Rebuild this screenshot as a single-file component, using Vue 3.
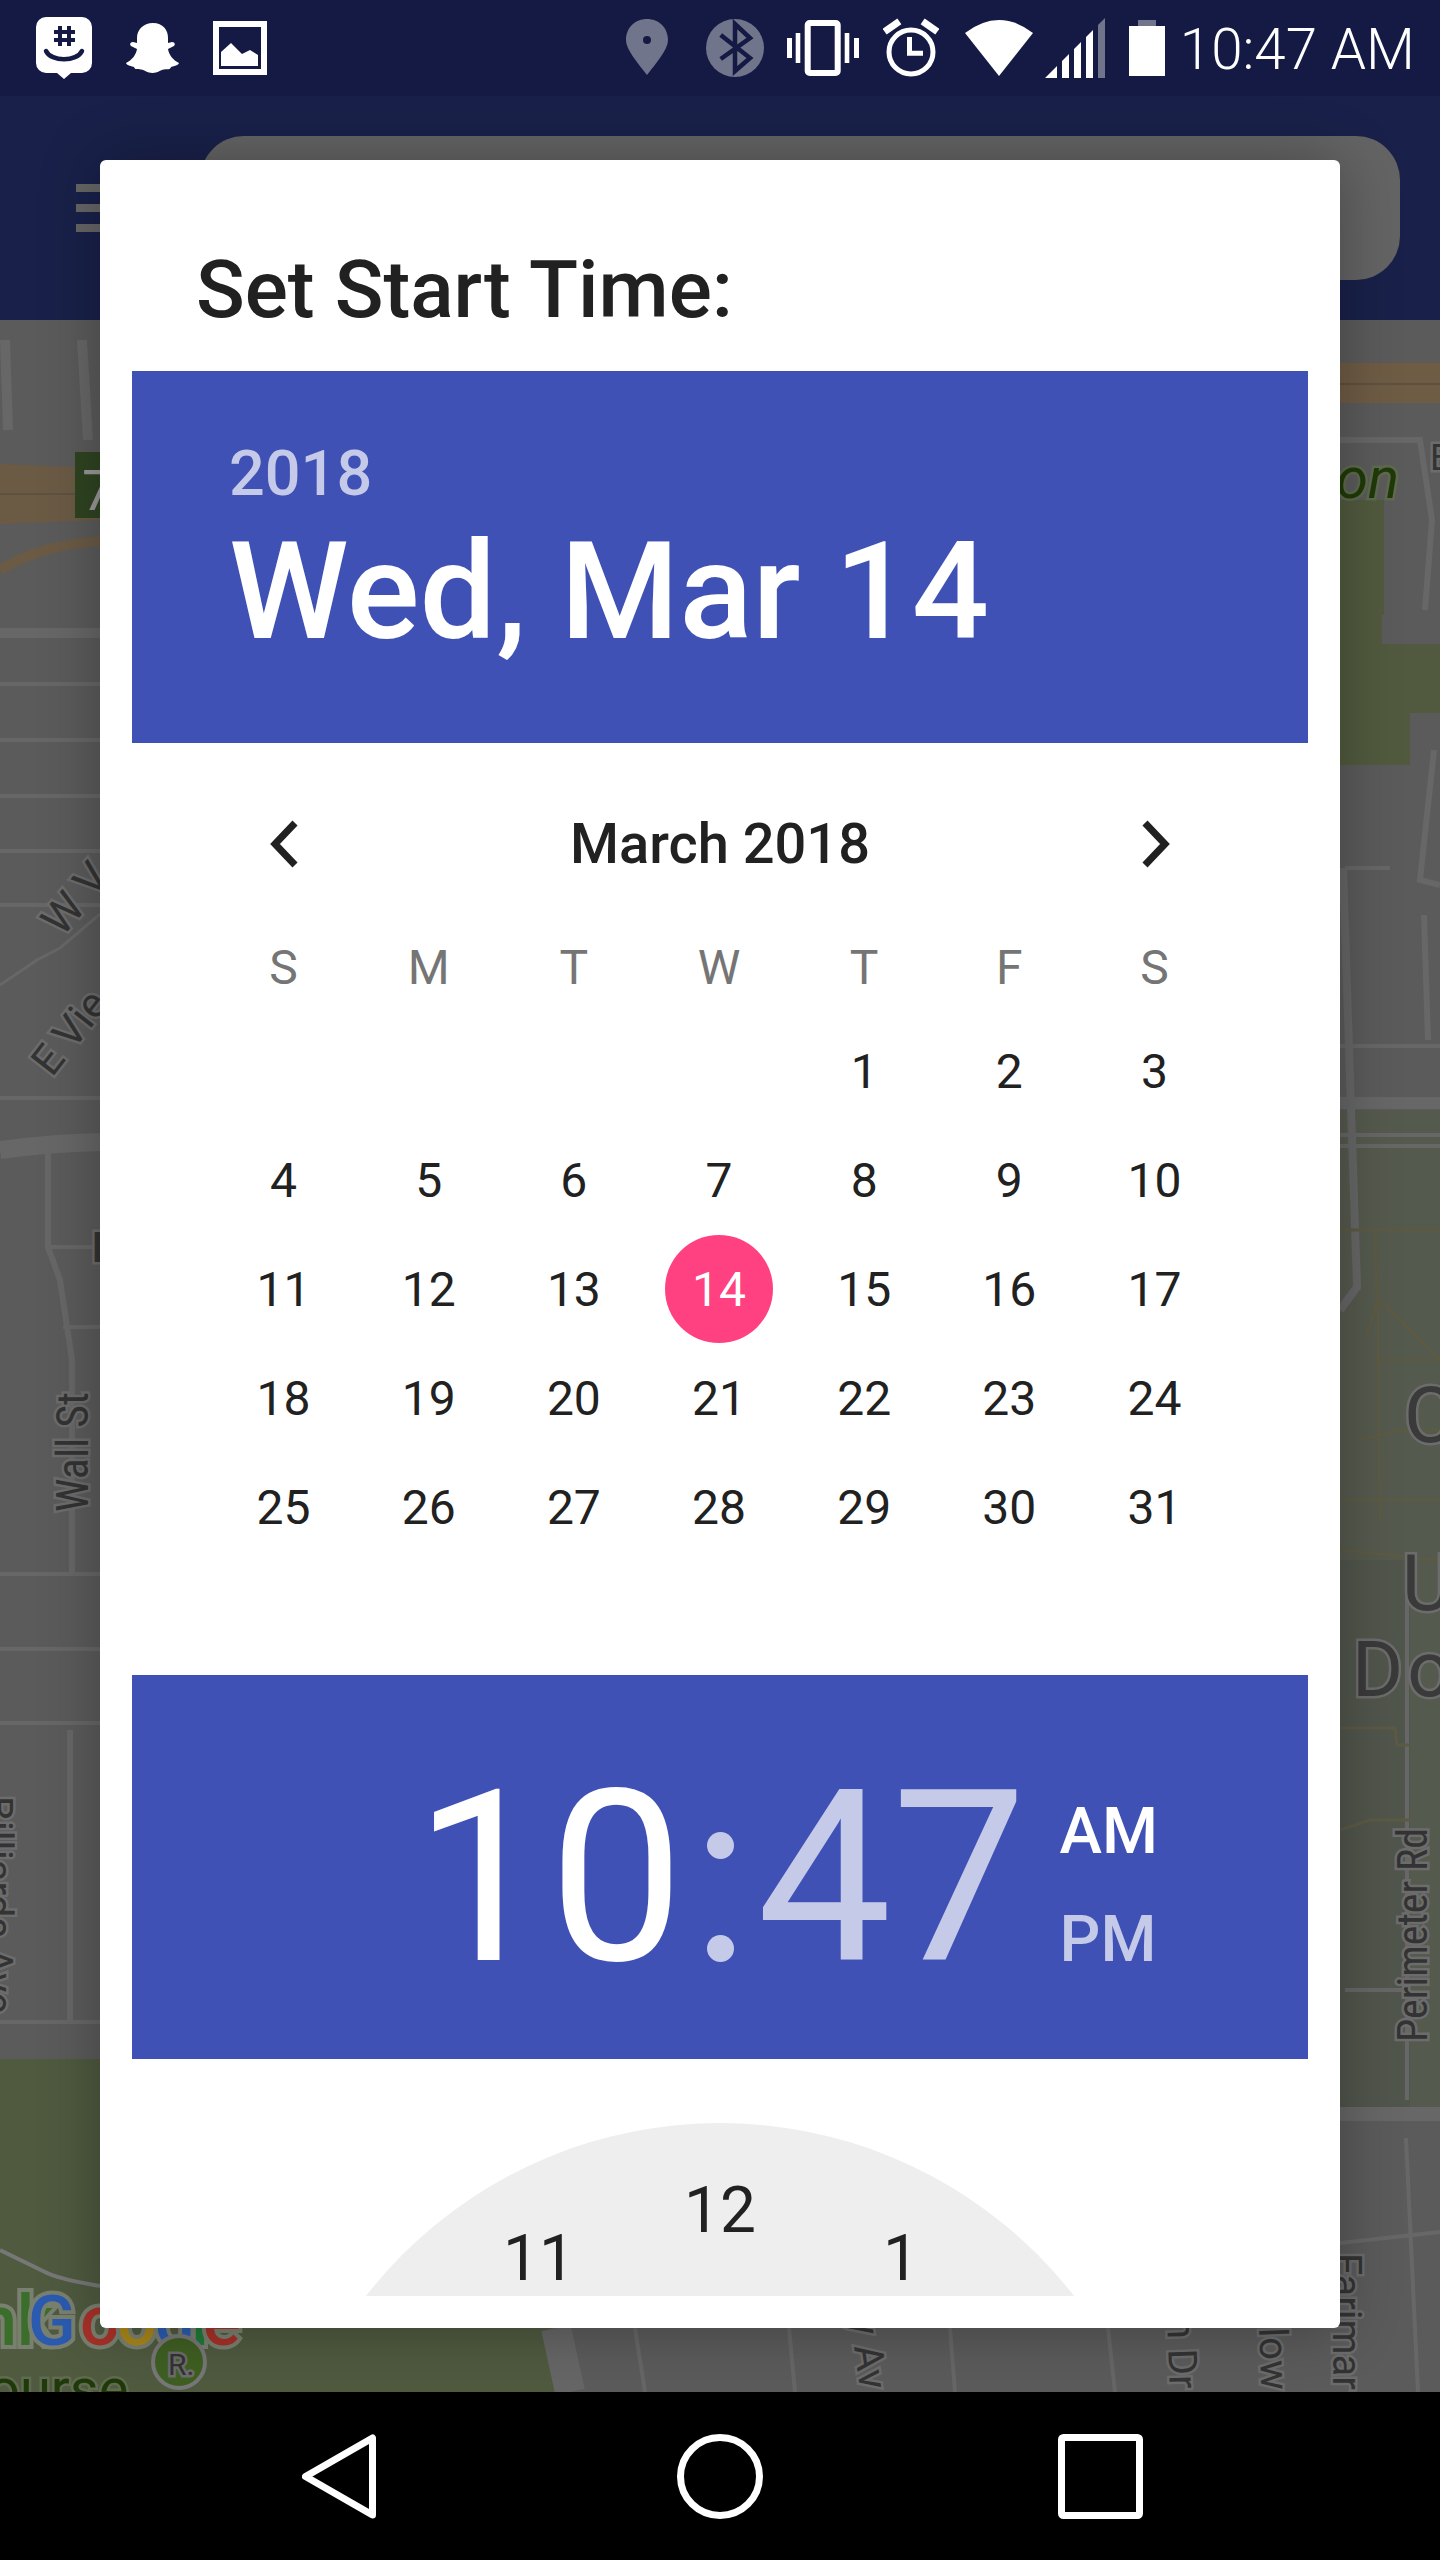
<template>
  <div class="phone">
    <div class="status-bar">
      <div class="status-left">
        <svg class="ico" width="56" height="96" viewBox="0 0 56 96">
          <path d="M10 17H46A10 10 0 0 1 56 27V63A10 10 0 0 1 46 73H35L28 79L21 73H10A10 10 0 0 1 0 63V27A10 10 0 0 1 10 17Z" fill="#fff" />
          <path d="M24 26V46M33 26V46M18 32H39M18 40H39" stroke="#141a43" stroke-width="4" fill="none" />
          <path d="M10 51C15 62 41 62 46 51" stroke="#141a43" stroke-width="4.5" stroke-linecap="round" fill="none" />
        </svg>
        <svg class="ico" width="53" height="96" viewBox="0 0 53 96">
          <path d="M27 23C37 23 42 30 42 38L42 43L46 42C49 42 50 45 47 46.5L42 49C43 55 47 60 53 63C52 66 47 66 45 67C44 70 42 69 38 69.5C34 70 32 73 26.5 73C21 73 19 70 15 69.5C11 69 9 70 8 67C6 66 1 66 0 63C6 60 10 55 11 49L6 46.5C3 45 4 42 7 42L11 43L11 38C11 30 17 23 27 23Z" fill="#fff" />
        </svg>
        <svg class="ico" width="54" height="96" viewBox="0 0 54 96">
          <rect x="3" y="24" width="48" height="48" fill="none" stroke="#fff" stroke-width="6" />
          <path d="M8 52L18 43L29 54L37 50L45 55V66H8Z" fill="#fff" />
        </svg>
      </div>
      <div class="status-right">
        <svg class="ico pin" width="42" height="96" viewBox="0 0 42 96">
          <path d="M21 19C32.6 19 42 27.5 42 40C42 50 30 63 21 75C12 63 0 50 0 40C0 27.5 9.4 19 21 19Z" fill="#71758b" />
          <circle cx="21" cy="40" r="4" fill="#141a43" />
        </svg>
        <svg class="ico bt" width="58" height="96" viewBox="0 0 58 96">
          <circle cx="29" cy="48" r="29" fill="#71758b" />
          <path d="M14.7 35L44 58L29 71V24L44 38L14.7 59" fill="none" stroke="#141a43" stroke-width="4.5" />
        </svg>
        <svg class="ico vib" width="72" height="96" viewBox="0 0 72 96">
          <path d="M0 38H5V58H0ZM8.7 33H13.3V63H8.7ZM57.7 33H62.3V63H57.7ZM67 38H72V58H67Z" fill="#fff" />
          <rect x="20.7" y="23" width="30" height="50" rx="2" fill="none" stroke="#fff" stroke-width="6" />
        </svg>
        <svg class="ico alarm" width="56" height="96" viewBox="0 0 56 96">
          <circle cx="28" cy="52" r="22" fill="none" stroke="#fff" stroke-width="5" />
          <path d="M24 37H29V50.7H40V55.7H24Z" fill="#fff" />
          <rect x="0" y="23" width="18" height="7" transform="rotate(-35 9 26.5)" fill="#fff" />
          <rect x="38" y="23" width="18" height="7" transform="rotate(35 47 26.5)" fill="#fff" />
        </svg>
        <svg class="ico wifi" width="68" height="96" viewBox="0 0 68 96">
          <path d="M34 76L0 33Q34 7 68 33Z" fill="#fff" />
        </svg>
        <svg class="ico signal" width="60" height="96" viewBox="0 0 60 96">
          <path d="M0 78L12 66V78ZM17 61L24 54V78H17ZM29 49L36 42V78H29ZM41 37L48 30V78H41Z" fill="#fff" />
          <path d="M53 25L60 18V78H53Z" fill="#71758b" />
        </svg>
        <svg class="ico batt" width="36" height="96" viewBox="0 0 36 96">
          <rect x="9" y="20" width="18" height="6" fill="#71758b" />
          <rect x="0" y="26" width="36" height="50" fill="#fff" />
        </svg>
        <span class="clock-text">10:47 AM</span>
      </div>
    </div>

    <div class="app-bar">
      <div class="burger"><i></i><i></i><i></i></div>
      <div class="search-pill"></div>
    </div>

    <svg class="map" viewBox="0 320 1440 2072" width="1440" height="2072">
      <rect x="0" y="320" width="1440" height="2072" fill="#5b5b5b" />
      <!-- parks -->
      <path d="M0 2059H200V2328H551L560 2392H0Z" fill="#4f5a3f" />
      <path d="M1340 500H1384V615H1382V644H1440V713H1410V765H1340Z" fill="#515a3e" />
      <path d="M1340 1110H1440V2114H1410L1405 1560H1340Z" fill="#555a4e" />
      <path d="M1340 1560H1410V2110H1340Z" fill="#51564c" />
      <!-- highway -->
      <path d="M0 464L100 468V520L0 524Z" fill="#6b5b45" />
      <path d="M0 570C30 552 60 544 100 541" stroke="#6b5b45" stroke-width="10" fill="none" />
      <path d="M1340 363H1440V403H1340Z" fill="#6f5c45" />
      <path d="M1340 384H1440M0 494H100" stroke="#5e5140" stroke-width="2" />
      <!-- left roads -->
      <g stroke="#676767" fill="none">
        <path d="M0 633H100" stroke-width="10" />
        <path d="M0 684H100M0 740H100M0 796H100M0 851H100M0 905H100M0 1098H100M0 1574H100M0 1649H100M0 1723H100M0 2022H100" stroke-width="4" />
        <path d="M0 985L37 960L60 948L100 914" stroke-width="3" />
        <path d="M0 1150C30 1146 60 1143 100 1142" stroke-width="18" />
        <path d="M48 1150V1247L60 1280L72 1360V1574" stroke-width="6" />
        <path d="M48 1247H100M63 1327H100" stroke-width="4" />
        <path d="M70 1730V2022" stroke-width="6" />
        <path d="M5 340L8 430M82 340L88 440" stroke-width="10" />
      </g>
      <!-- right roads -->
      <g stroke="#676767" fill="none">
        <path d="M1340 1046H1440M1340 1135H1440M1340 1146H1440M1345 868H1390" stroke-width="4" />
        <path d="M1340 1103H1440" stroke-width="12" />
        <path d="M1343 868L1357 1287L1340 1310" stroke-width="8" />
        <path d="M1340 440H1420L1432 520L1425 610" stroke-width="6" />
        <path d="M1434 750L1420 880L1440 885M1424 915L1428 1040" stroke-width="6" />
        <path d="M1340 2114H1440" stroke-width="14" />
        <path d="M1406 2138L1418 2392M1340 2243L1440 2232" stroke-width="4" />
        <path d="M1345 1990H1410M1407 1560V2100" stroke-width="4" />
      </g>
      <!-- wooded trails -->
      <g stroke="#5d5a44" fill="none" stroke-width="3">
        <path d="M1340 1230H1440M1375 1230L1378 1320L1380 1520" />
        <path d="M1365 1340L1378 1300L1400 1320L1440 1360" />
        <path d="M1378 1360H1440M1360 1440L1400 1430H1440M1340 1500H1440M1340 1550L1440 1560" />
        <path d="M1340 1728H1395L1397 1745H1410M1340 1830L1370 1820H1410" />
      </g>
      <!-- bottom strip -->
      <g stroke="#666" fill="none">
        <path d="M556 2328L570 2392" stroke-width="30" />
        <path d="M635 2328L645 2392M789 2328L795 2392M950 2328L955 2392M1108 2328L1115 2392" stroke-width="4" />
      </g>
      <path d="M0 2250L45 2272C60 2280 90 2284 100 2286" stroke="#777" stroke-width="4" fill="none" />

      <!-- map labels -->
      <g class="map-label">
        <rect x="75" y="452" width="40" height="66" fill="#2f4421" />
        <text x="82" y="510" class="sign">7</text>
        <text class="lbl" font-size="44" transform="translate(62 938) rotate(-50)">W V</text>
        <text class="lbl" font-size="42" transform="translate(52 1078) rotate(-52)">E Vie</text>
        <text class="lbl bold" font-size="42" x="92" y="1262">E</text>
        <text class="lbl thin" font-size="44" transform="translate(88 1512) rotate(-90)">Wall St</text>
        <text class="lbl" font-size="40" transform="translate(-16 1796) rotate(90)">Billiards Ave</text>
        <text class="lbl green" font-size="58" x="1336" y="498" font-style="italic">on</text>
        <text class="lbl" font-size="36" x="1430" y="470">E</text>
        <text class="lbl big" font-size="78" x="1404" y="1442">C</text>
        <text class="lbl big" font-size="78" x="1402" y="1610">U</text>
        <text class="lbl big" font-size="78" x="1352" y="1696">Do</text>
        <text class="lbl thin" font-size="42" transform="translate(1427 2042) rotate(-90)">Perimeter Rd</text>
        <text class="lbl" font-size="40" transform="translate(850 2318) rotate(82)">y Av</text>
        <text class="lbl" font-size="40" transform="translate(1166 2285) rotate(88)">ign Dr</text>
        <text class="lbl" font-size="40" transform="translate(1256 2240) rotate(88)">Winslow</text>
        <text class="lbl" font-size="40" transform="translate(1333 2253) rotate(90)">Farimar</text>
      </g>
      <g class="google">
        <text x="-22" y="2345" fill="#3b6e2b">nk</text>
        <text x="28" y="2345" fill="#2a5bb0">G</text>
        <text x="80" y="2345" fill="#a63128">o</text>
        <text x="117" y="2345" fill="#a8861a">o</text>
        <text x="155" y="2345" fill="#2a5bb0">g</text>
        <text x="191" y="2345" fill="#1f7a36">l</text>
        <text x="203" y="2345" fill="#a63128">e</text>
      </g>
      <circle cx="179" cy="2362" r="26" fill="#3f5f22" stroke="#777" stroke-width="4" />
      <text class="lbl" font-size="30" x="168" y="2375" fill="#aaa">R.</text>
      <text class="lbl green" font-size="56" x="-12" y="2408">ourse</text>
    </svg>

    <div class="nav-bar">
      <svg width="74" height="85" viewBox="0 0 74 85">
        <path d="M70.5 4V81L3.5 42.5Z" fill="none" stroke="#fff" stroke-width="7" stroke-linejoin="round" />
      </svg>
      <svg class="nav-home" width="86" height="85" viewBox="0 0 86 85">
        <ellipse cx="43" cy="42.5" rx="39.5" ry="39" fill="none" stroke="#fff" stroke-width="7" />
      </svg>
      <svg class="nav-square" width="85" height="85" viewBox="0 0 85 85">
        <rect x="3.5" y="3.5" width="78" height="78" rx="2" fill="none" stroke="#fff" stroke-width="7" stroke-linejoin="round" />
      </svg>
    </div>

    <div class="dialog">
      <div class="dialog-title">Set Start Time:</div>

      <div class="date-header">
        <div class="date-year">2018</div>
        <div class="date-full">Wed, Mar 14</div>
      </div>

      <div class="calendar">
        <div class="month-row">
          <svg width="30" height="48" viewBox="0 0 30 48">
            <path d="M26 3L6 24L26 45" fill="none" stroke="#212121" stroke-width="7" />
          </svg>
          <span class="month-name">March 2018</span>
          <svg width="30" height="48" viewBox="0 0 30 48">
            <path d="M4 3L24 24L4 45" fill="none" stroke="#212121" stroke-width="7" />
          </svg>
        </div>
        <div class="week-row">
          <span v-for="(d, i) in weekdays" :key="i">{{ d }}</span>
        </div>
        <div class="day-grid">
          <span v-for="n in 4" :key="'e' + n"></span>
          <span
            v-for="day in 31"
            :key="day"
            class="day"
            :class="{ selected: day === selectedDay }"
          >{{ day }}</span>
        </div>
      </div>

      <div class="time-header">
        <span class="time-digits">10</span>
        <span class="time-colon"><i></i><i></i></span>
        <span class="time-digits dim">47</span>
        <div class="ampm">
          <span>AM</span>
          <span class="dim">PM</span>
        </div>
      </div>

      <div class="clock-clip">
        <div class="clock-face">
          <span
            v-for="n in clockNumbers"
            :key="n.label"
            class="clock-num"
            :style="{ left: n.x + 'px', top: n.y + 'px' }"
          >{{ n.label }}</span>
        </div>
      </div>
    </div>
  </div>
</template>

<script setup>
import { ref, computed } from 'vue'

const weekdays = ['S', 'M', 'T', 'W', 'T', 'F', 'S']
const selectedDay = ref(14)

const clockNumbers = computed(() => {
  return [11, 12, 1].map((h) => {
    const angle = (h / 12) * Math.PI * 2
    return {
      label: h,
      x: 449 + 362 * Math.sin(angle),
      y: 450 - 362 * Math.cos(angle)
    }
  })
})
</script>

<style scoped>
.phone {
  position: relative;
  width: 1440px;
  height: 2560px;
  overflow: hidden;
  display: flex;
  flex-direction: column;
  font-family: Roboto, "Liberation Sans", sans-serif;
  background: #000;
}

.status-bar {
  height: 96px;
  display: flex;
  justify-content: space-between;
  background: #141a43;
  padding: 0 25px 0 36px;
  box-sizing: border-box;
}

.status-left,
.status-right {
  display: flex;
  align-items: center;
}

.ico {
  display: block;
  flex: none;
}

.status-left .ico + .ico {
  margin-left: 34px;
}

.bt { margin-left: 38px; }
.vib { margin-left: 23px; }
.alarm { margin-left: 24px; }
.wifi { margin-left: 26px; }
.signal { margin-left: 12px; }
.batt { margin-left: 24px; }

.clock-text {
  margin-left: 15px;
  padding-top: 3px;
  color: #fff;
  font-size: 56.5px;
  font-weight: 300;
  white-space: nowrap;
}

.app-bar {
  height: 224px;
  background: #19214a;
  display: flex;
  align-items: flex-start;
  padding: 40px 40px 0 76px;
  box-sizing: border-box;
}

.burger {
  width: 48px;
  margin-top: 48px;
  display: flex;
  flex-direction: column;
  gap: 12px;
}

.burger i {
  display: block;
  height: 8px;
  background: #666;
}

.search-pill {
  flex: 1;
  height: 144px;
  margin-left: 76px;
  border-radius: 44px;
  background: #646464;
}

.map {
  display: block;
  flex: none;
}

.lbl {
  fill: #333;
  stroke: #6c6c6c;
  stroke-width: 5px;
  paint-order: stroke;
  font-family: Roboto, sans-serif;
}

.lbl.bold { font-weight: 700; }
.lbl.thin { font-stretch: condensed; }
.lbl.green { fill: #1f3a08; stroke: #5f6a50; }
.lbl.big { fill: #3a3a3a; letter-spacing: 4px; }

.sign {
  fill: #999;
  font-size: 56px;
  font-family: Roboto, sans-serif;
}

.google text {
  font-family: Roboto, sans-serif;
  font-size: 70px;
  font-weight: 500;
  stroke: #7a8070;
  stroke-width: 8px;
  paint-order: stroke;
}

.nav-bar {
  height: 168px;
  background: #000;
  display: flex;
  align-items: center;
  padding-left: 302px;
}

.nav-home { margin-left: 301px; }
.nav-square { margin-left: 295px; }

.dialog {
  position: absolute;
  left: 100px;
  top: 160px;
  width: 1240px;
  height: 2168px;
  padding: 90px 32px 0;
  box-sizing: border-box;
  background: #fff;
  border-radius: 6px;
  overflow: hidden;
  box-shadow: 0 0 60px rgba(0, 0, 0, 0.3);
}

.dialog-title {
  padding-left: 64px;
  font-size: 80.5px;
  line-height: 80px;
  font-weight: 500;
  color: #212121;
  margin-bottom: 41px;
}

.date-header {
  height: 372px;
  background: #3f51b5;
  padding: 71px 0 0 97px;
  box-sizing: border-box;
}

.date-year {
  font-size: 63px;
  line-height: 64px;
  font-weight: 500;
  color: #c5cae9;
}

.date-full {
  margin-top: 19px;
  font-size: 136px;
  line-height: 134px;
  font-weight: 500;
  color: #fff;
  white-space: nowrap;
}

.calendar {
  height: 932px;
  padding: 73px 81px 0 79px;
  box-sizing: border-box;
}

.month-row {
  display: flex;
  align-items: center;
  justify-content: space-between;
  height: 56px;
  padding: 0 56px 0 58px;
}

.month-name {
  font-size: 56px;
  line-height: 56px;
  font-weight: 500;
  color: #212121;
}

.week-row,
.day-grid {
  display: grid;
  grid-template-columns: repeat(7, 1fr);
  text-align: center;
}

.week-row {
  margin-top: 48px;
  height: 96px;
  line-height: 96px;
  font-size: 48px;
  color: #757575;
}

.day-grid {
  grid-auto-rows: 109px;
  margin-top: 1px;
  font-size: 48px;
  color: #212121;
}

.day {
  display: flex;
  align-items: center;
  justify-content: center;
}

.day.selected {
  justify-self: center;
  width: 108px;
  height: 108px;
  border-radius: 50%;
  background: #ff4081;
  color: #fff;
}

.time-header {
  height: 384px;
  background: #3f51b5;
  display: flex;
  align-items: center;
  padding: 22px 0 0 282px;
  box-sizing: border-box;
  color: #fff;
}

.time-digits {
  font-size: 240px;
  line-height: 240px;
  white-space: nowrap;
}

.dim {
  color: #c5cae9;
}

.time-colon {
  display: flex;
  flex-direction: column;
  gap: 76px;
  margin: 0 23px 0 23px;
  padding-top: 38px;
}

.time-colon i {
  display: block;
  width: 27px;
  height: 27px;
  border-radius: 50%;
  background: #c5cae9;
}

.ampm {
  display: flex;
  flex-direction: column;
  margin-left: 33px;
  padding-top: 16px;
  font-size: 64px;
  line-height: 108px;
  font-weight: 500;
}

.clock-clip {
  height: 173px;
  margin-top: 64px;
  overflow: hidden;
}

.clock-face {
  position: relative;
  width: 898px;
  height: 898px;
  margin: 0 auto;
  border-radius: 50%;
  background: #eee;
}

.clock-num {
  position: absolute;
  transform: translate(-50%, -50%);
  font-size: 64px;
  line-height: 64px;
  color: #212121;
}
</style>
